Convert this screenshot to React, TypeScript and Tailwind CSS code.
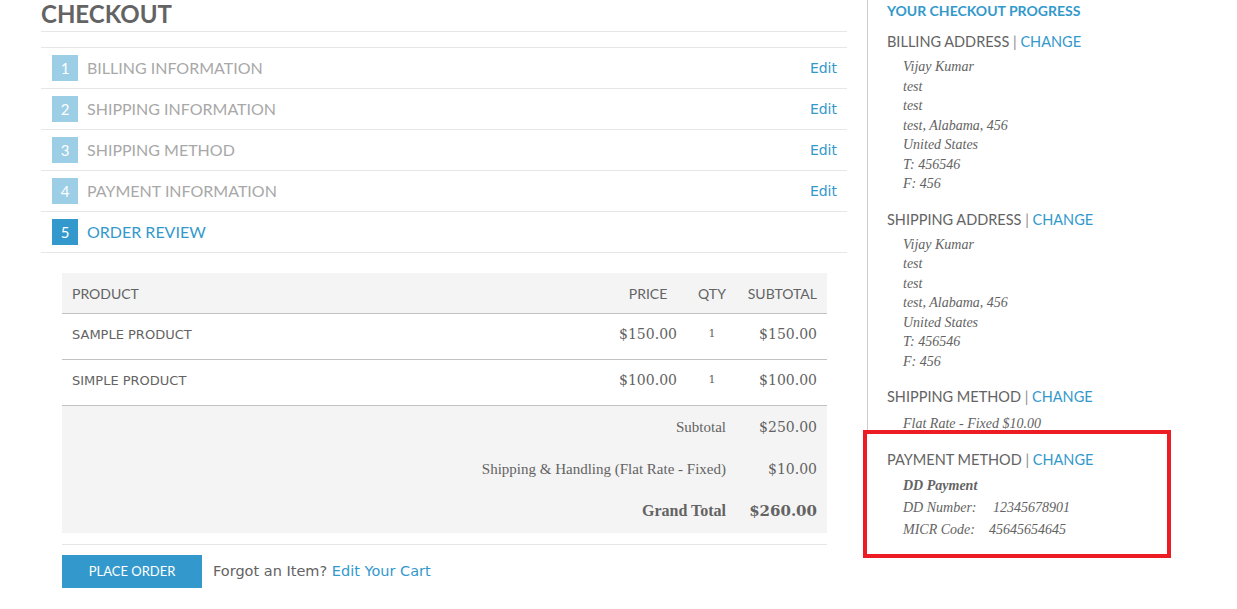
import React from "react";

const STEPS = [
  { n: 1, label: "Billing Information" },
  { n: 2, label: "Shipping Information" },
  { n: 3, label: "Shipping Method" },
  { n: 4, label: "Payment Information" },
];

const ITEMS = [
  { name: "Sample Product", price: "$150.00", qty: "1", sub: "$150.00" },
  { name: "Simple Product", price: "$100.00", qty: "1", sub: "$100.00" },
];

const ADDRESS = ["Vijay Kumar", "test", "test", "test, Alabama, 456", "United States", "T: 456546", "F: 456"];

const head = { fontFamily: "Lato, 'Open Sans', sans-serif" };
const sans = { fontFamily: "'DejaVu Sans', Verdana, sans-serif" };
const serif = { fontFamily: "'Liberation Serif', Georgia, serif" };
const digits = { fontFamily: "'DejaVu Serif', Georgia, serif" };

function SideTitle({ children }: { children: React.ReactNode }) {
  return (
    <div className="text-[14.5px] uppercase text-[#636363] leading-[20px]" style={head}>
      {children} <span className="text-[#8a8a8a]">|</span>{" "}
      <span className="text-[#3399cc]">Change</span>
    </div>
  );
}

function Address() {
  return (
    <div className="pl-[16px] mt-[5px] italic text-[14px] leading-[19.5px] text-[#636363]" style={serif}>
      {ADDRESS.map((l, i) => (
        <div key={i}>{l}</div>
      ))}
    </div>
  );
}

export default function App() {
  return (
    <div className="flex w-[1237px] h-[609px] overflow-hidden bg-white text-[#636363]">
      <div className="ml-[41px] w-[806px] shrink-0">
        <div className="h-[32px] border-b border-[#e6e6e6] flex items-center">
          <h1 className="text-[24px] font-bold text-[#636363] leading-none -mt-[4px]" style={head}>
            CHECKOUT
          </h1>
        </div>

        <div className="mt-[15px] border-t border-[#e6e6e6]">
          {STEPS.map((s) => (
            <div key={s.n} className="flex items-center h-[41px] border-b border-[#e6e6e6] pl-[11px] pr-[10px]">
              <div className="w-[26px] h-[26px] bg-[#9ccee6] text-white text-[15px] flex items-center justify-center" style={head}>
                {s.n}
              </div>
              <div className="ml-[9px] text-[16px] uppercase text-[#a8a8a8] flex-1" style={head}>
                {s.label}
              </div>
              <a className="text-[14px] text-[#3399cc] mt-[1px]" style={sans}>Edit</a>
            </div>
          ))}
          <div className="flex items-center h-[41px] border-b border-[#e6e6e6] pl-[11px]">
            <div className="w-[26px] h-[26px] bg-[#3399cc] text-white text-[15px] flex items-center justify-center" style={head}>
              5
            </div>
            <div className="ml-[9px] text-[16px] uppercase text-[#3399cc]" style={head}>
              Order Review
            </div>
          </div>
        </div>

        <div className="pr-[20px] pt-[20px] pl-[21px]">
          <div className="bg-[#f4f4f4] h-[41px] border-b border-[#c2c2c2] flex items-center text-[14px] uppercase text-[#636363]" style={head}>
            <div className="flex-1 pl-[10px]">Product</div>
            <div className="w-[80px] text-center">Price</div>
            <div className="w-[48px] text-center">Qty</div>
            <div className="w-[91px] text-right pr-[10px]">Subtotal</div>
          </div>
          {ITEMS.map((it) => (
            <div key={it.name} className="h-[46px] border-b border-[#c2c2c2] flex items-center pb-[4px]">
              <div className="flex-1 pl-[10px] text-[13px] uppercase text-[#636363]" style={sans}>
                {it.name}
              </div>
              <div className="w-[80px] text-center text-[14px]" style={digits}>{it.price}</div>
              <div className="w-[48px] text-center text-[11px]" style={digits}>{it.qty}</div>
              <div className="w-[91px] text-right pr-[10px] text-[14px]" style={digits}>{it.sub}</div>
            </div>
          ))}
          <div className="bg-[#f4f4f4] h-[127px]">
            <div className="flex items-center h-[42px]">
              <div className="flex-1 text-right text-[15px]" style={serif}>Subtotal</div>
              <div className="w-[101px] text-right pr-[10px] text-[14px]" style={digits}>$250.00</div>
            </div>
            <div className="flex items-center h-[42px]">
              <div className="flex-1 text-right text-[15px]" style={serif}>Shipping &amp; Handling (Flat Rate - Fixed)</div>
              <div className="w-[101px] text-right pr-[10px] text-[14px]" style={digits}>$10.00</div>
            </div>
            <div className="flex items-center h-[42px]">
              <div className="flex-1 text-right text-[16px] font-bold" style={serif}>Grand Total</div>
              <div className="w-[101px] text-right pr-[10px] text-[15px] font-bold" style={digits}>$260.00</div>
            </div>
          </div>
          <div className="mt-[11px] border-t border-[#e6e6e6] pt-[10px] flex items-center">
            <button className="w-[140px] h-[33px] bg-[#3399cc] text-white text-[13px] uppercase" style={head}>
              Place Order
            </button>
            <span className="ml-[11px] text-[14.5px] text-[#636363]" style={sans}>
              Forgot an Item? <a className="text-[#3399cc]">Edit Your Cart</a>
            </span>
          </div>
        </div>
      </div>

      <div className="ml-[20px] w-[330px] shrink-0">
        <div className="border-l border-[#cccccc] pl-[19px]">
          <div className="text-[14px] font-bold uppercase text-[#3399cc] leading-[20px] pt-[1px]" style={head}>
            Your Checkout Progress
          </div>
          <div className="mt-[11px]">
            <SideTitle>Billing Address</SideTitle>
            <Address />
          </div>
          <div className="mt-[16px]">
            <SideTitle>Shipping Address</SideTitle>
            <Address />
          </div>
          <div className="mt-[16px]">
            <SideTitle>Shipping Method</SideTitle>
            <div className="pl-[16px] mt-[9px] italic text-[14px] leading-[16px]" style={serif}>
              Flat Rate - Fixed $10.00
            </div>
          </div>
        </div>
        <div className="-ml-[4px] -mt-[2px] w-[308px] h-[128px] border-4 border-[#ed1c24] bg-white pl-[20px] pt-[16px]">
          <SideTitle>Payment Method</SideTitle>
          <div className="pl-[16px] mt-[5px] italic text-[14px] text-[#636363]" style={serif}>
            <div className="font-bold leading-[22px]">DD Payment</div>
            <div className="leading-[22px] flex">
              <span className="w-[90px]">DD Number:</span>
              <span>12345678901</span>
            </div>
            <div className="leading-[22px] flex">
              <span className="w-[86px]">MICR Code:</span>
              <span>45645654645</span>
            </div>
          </div>
        </div>
      </div>
    </div>
  );
}
